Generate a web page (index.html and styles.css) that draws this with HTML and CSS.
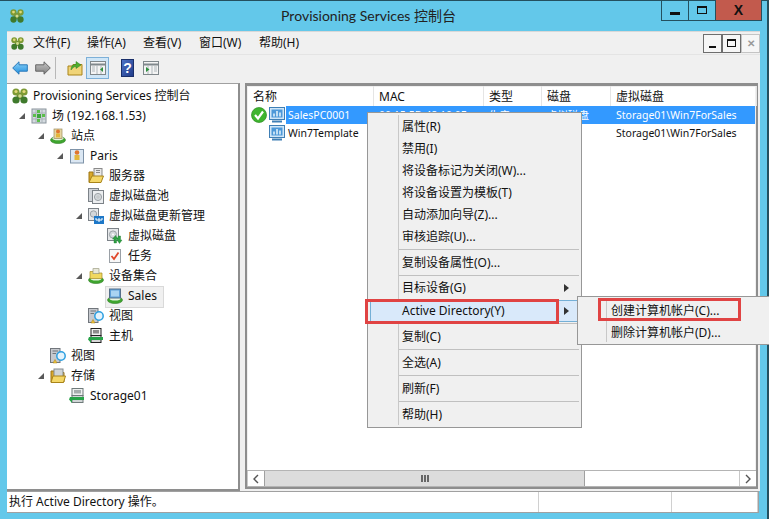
FILE: index.html
```html
<!DOCTYPE html>
<html lang="zh">
<head>
<meta charset="utf-8">
<title>Provisioning Services 控制台</title>
<link rel="stylesheet" href="styles.css">
</head>
<body>
<svg class="sprite" width="0" height="0" aria-hidden="true">
  <defs>
    <linearGradient id="gb" x1="0" y1="0" x2="0" y2="1"><stop offset="0" stop-color="#8fd4f7"/><stop offset="1" stop-color="#1f8fe0"/></linearGradient>
    <linearGradient id="gg" x1="0" y1="0" x2="0" y2="1"><stop offset="0" stop-color="#c4c4c4"/><stop offset="1" stop-color="#808080"/></linearGradient>
    <linearGradient id="gh" x1="0" y1="0" x2="1" y2="1"><stop offset="0" stop-color="#4f74c8"/><stop offset="1" stop-color="#1f3a88"/></linearGradient>
    <symbol id="logo" viewBox="0 0 16 16">
      <path d="M5 5L11 11M11 5L5 11" stroke="#6f8a35" stroke-width="4"/>
      <circle cx="4" cy="4" r="3.6" fill="#7d9a35"/><circle cx="12" cy="4" r="3.6" fill="#7d9a35"/>
      <circle cx="4" cy="12" r="3.6" fill="#3f7a2c"/><circle cx="12" cy="12" r="3.6" fill="#3f7a2c"/>
      <circle cx="4" cy="3.5" r="1.6" fill="#e2d878"/><circle cx="12" cy="3.5" r="1.6" fill="#e2d878"/>
      <circle cx="8" cy="8" r="1.8" fill="#d0dd90"/>
    </symbol>
    <symbol id="tri" viewBox="0 0 6 6"><path d="M6 0V6H0Z" fill="#595959"/></symbol>
    <symbol id="farm" viewBox="0 0 16 16">
      <rect x="1" y="1" width="14" height="14" fill="#d4dbe0" stroke="#8a949c"/>
      <path d="M5 1V15M11 1V15M1 5H15M1 11H15" stroke="#aab2b8"/>
      <rect x="6" y="6" width="4" height="4" fill="#3ea53e"/>
      <rect x="2" y="6" width="3" height="3" fill="#5bbf4a"/><rect x="11" y="6" width="3" height="3" fill="#5bbf4a"/>
      <rect x="6" y="2" width="3" height="3" fill="#5bbf4a"/><rect x="6" y="11" width="3" height="3" fill="#5bbf4a"/>
    </symbol>
    <symbol id="site" viewBox="0 0 16 16">
      <ellipse cx="8" cy="12" rx="7.5" ry="3.6" fill="#3fa52f" stroke="#2e7d22" stroke-width=".6"/>
      <ellipse cx="8" cy="10.2" rx="5.4" ry="2" fill="#e8f4e0"/>
      <rect x="4" y="1" width="8" height="9.5" fill="#e6d6a0" stroke="#9c8e60" stroke-width=".7"/>
      <circle cx="8" cy="3.5" r="2" fill="#e0762e"/><rect x="6" y="5.5" width="4" height="3.8" fill="#e3b63a"/>
    </symbol>
    <symbol id="paris" viewBox="0 0 16 16">
      <rect x="1.5" y="1.5" width="13" height="13.5" fill="#dbe7f3" stroke="#7f93a8"/>
      <circle cx="8" cy="4.5" r="2.3" fill="#e0762e"/><rect x="5.5" y="7" width="5" height="5" fill="#e3b63a"/>
    </symbol>
    <symbol id="srv" viewBox="0 0 16 16">
      <rect x="6" y="0.5" width="8" height="8" fill="#e8e8e8" stroke="#8a8a8a"/>
      <path d="M8 2.5H12M8 4.5H12" stroke="#8a8a8a"/>
      <path d="M1 4H5L5 14H13L13 14H1Z" fill="#d9a92c" stroke="#9c7413"/>
      <path d="M1 14.5L4 8H15.5L13 14.5Z" fill="#f4d768" stroke="#a98419"/>
    </symbol>
    <symbol id="pool" viewBox="0 0 16 16">
      <rect x="0.5" y="0.5" width="10" height="13" fill="#cfd3d8" stroke="#7c8288"/>
      <rect x="4.5" y="2.5" width="11" height="13" fill="#eceef0" stroke="#7c8288"/>
      <circle cx="10" cy="9" r="3.6" fill="#d3d7da" stroke="#9ca2a7"/><circle cx="10" cy="9" r="1" fill="#fff" stroke="#8a8f93" stroke-width=".5"/>
    </symbol>
    <symbol id="upd" viewBox="0 0 16 16">
      <rect x="0.5" y="0.5" width="10" height="12" fill="#e6e8ea" stroke="#7c8288"/>
      <circle cx="5.5" cy="6" r="3.2" fill="#d3d7da" stroke="#9ca2a7"/>
      <rect x="6" y="8" width="10" height="8" fill="#1e78c8"/>
      <path d="M8 10V12H14V10M11 10V14" stroke="#fff" fill="none"/>
    </symbol>
    <symbol id="vd" viewBox="0 0 16 16">
      <rect x="0.5" y="0.5" width="11" height="12" fill="#e6e8ea" stroke="#7c8288"/>
      <circle cx="6" cy="6.5" r="3.6" fill="#d3d7da" stroke="#9ca2a7"/><circle cx="6" cy="6.5" r="1" fill="#fff"/>
      <path d="M7 15V11L5.5 11L8.5 7.5L11 11H9.5V15ZM11 8H13.5V12H15L12.5 15.5L10 12" fill="#2ea043" stroke="#1c7a2e" stroke-width=".4"/>
    </symbol>
    <symbol id="task" viewBox="0 0 16 16">
      <rect x="2.5" y="1.5" width="11" height="13" fill="#f8f8f8" stroke="#9aa0a6"/>
      <path d="M4.5 8L7 11L11.5 4.5" stroke="#e0472a" stroke-width="1.8" fill="none"/>
    </symbol>
    <symbol id="coll" viewBox="0 0 16 16">
      <ellipse cx="8" cy="12" rx="7.5" ry="3.6" fill="#3fa52f" stroke="#2e7d22" stroke-width=".6"/>
      <ellipse cx="8" cy="10.4" rx="5.4" ry="2" fill="#e8f4e0"/>
      <path d="M2 3.5H6L7 5H14V10.5H2Z" fill="#f0d860" stroke="#a58b22" stroke-width=".7"/>
      <rect x="5" y="0.7" width="6" height="5" fill="#e8e8d8" stroke="#8d8d70" stroke-width=".6"/>
    </symbol>
    <symbol id="sales" viewBox="0 0 16 16">
      <ellipse cx="8" cy="12" rx="7.5" ry="3.6" fill="#3fa52f" stroke="#2e7d22" stroke-width=".6"/>
      <ellipse cx="8" cy="10.4" rx="5.4" ry="2" fill="#e8f4e0"/>
      <rect x="2.5" y="1" width="11" height="9" fill="#5d9fd8" stroke="#56708a"/>
      <rect x="4" y="2.5" width="8" height="6" fill="#a9d3f2"/>
    </symbol>
    <symbol id="view" viewBox="0 0 16 16">
      <rect x="0.5" y="0.5" width="9.5" height="14" fill="#c6c9ce" stroke="#71767c"/>
      <path d="M2.5 3H8M2.5 5.5H6" stroke="#71767c"/>
      <circle cx="11" cy="8" r="4.2" fill="#e4f3fc" stroke="#2d9fe0" stroke-width="1.5"/>
      <path d="M5 11.5L7 15H3Z" fill="#efc33a" stroke="#a5801a" stroke-width=".5"/>
    </symbol>
    <symbol id="host" viewBox="0 0 16 16">
      <rect x="3" y="0.5" width="10" height="7" fill="#f0f0f0" stroke="#222"/>
      <rect x="3" y="7.5" width="10" height="7" fill="#d8d8d8" stroke="#222"/>
      <rect x="5" y="2" width="6" height="3.5" fill="#8d8d8d"/>
      <path d="M1 9H15V12H3V15L0 11.5Z" fill="#27a348"/>
    </symbol>
    <symbol id="store" viewBox="0 0 16 16">
      <path d="M1 3H6L7 4.5H14V14H1Z" fill="#d9a92c" stroke="#9c7413"/>
      <rect x="4" y="1" width="9" height="9" fill="#cfd5d8" stroke="#858c90"/>
      <path d="M1 14.5L3 8H15.5L13.5 14.5Z" fill="#f4d768" stroke="#a98419"/>
    </symbol>
    <symbol id="stor1" viewBox="0 0 16 16">
      <rect x="3" y="0.5" width="11" height="7" fill="#eef0f0" stroke="#6f7a7a"/>
      <rect x="3" y="7.5" width="11" height="7" fill="#cfd5d5" stroke="#6f7a7a"/>
      <rect x="5" y="2" width="7" height="3.5" fill="#a5adad"/>
      <path d="M1 9H15V12H3V15L0 11.5Z" fill="#27a348"/>
    </symbol>
    <symbol id="pc" viewBox="0 0 16 16">
      <rect x="0.5" y="0.5" width="15" height="12" fill="#cfe6f8" stroke="#3f7fb5"/>
      <rect x="2.5" y="2.5" width="11" height="8" fill="#4d98d8"/>
      <path d="M5 9.5V6.5M8 9.5V4M11 9.5V5.5" stroke="#dff0fb" stroke-width="1.6"/>
      <path d="M3 14.5H13" stroke="#3f7fb5" stroke-width="2"/>
    </symbol>
    <symbol id="ok" viewBox="0 0 16 16">
      <circle cx="8" cy="8" r="7.5" fill="#3fb52f" stroke="#2a8a20" stroke-width=".7"/>
      <path d="M4 8L7 11.5L12 4.5" stroke="#fff" stroke-width="2.2" fill="none"/>
    </symbol>
    <symbol id="back" viewBox="0 0 16 14"><path d="M.7 7L7 .8V3.8H15.3V10.2H7V13.2Z" fill="url(#gb)" stroke="#2a78b8" stroke-linejoin="round"/></symbol>
    <symbol id="fwd" viewBox="0 0 16 14"><path d="M15.3 7L9 .8V3.8H.7V10.2H9V13.2Z" fill="url(#gg)" stroke="#666" stroke-linejoin="round"/></symbol>
    <symbol id="up" viewBox="0 0 16 16">
      <path d="M1 6H5L6 4.5H15V15H1Z" fill="#f0d478" stroke="#a98419"/>
      <path d="M4 10C4 6 6 4.500 9 4.500V1.500L14 5L9 8.500V6.500C7 6.500 5.500 8 4 10Z" fill="#4fae2f" stroke="#2c7e20" stroke-width=".5"/>
    </symbol>
    <symbol id="panel-l" viewBox="0 0 16 16">
      <rect x="0.5" y="1.5" width="15" height="13" fill="#f4f4f4" stroke="#80888c"/>
      <path d="M0.5 4.500H15.500" stroke="#80888c" stroke-width="2"/>
      <path d="M7 5V14M11 5V14" stroke="#b0b8bc"/>
      <path d="M13 7V12L10 9.500Z" fill="#2e8f3e"/><path d="M2 7H5M2 9H5M2 11H5" stroke="#b0b8bc"/>
    </symbol>
    <symbol id="panel-r" viewBox="0 0 16 16">
      <rect x="0.5" y="1.5" width="15" height="13" fill="#f4f4f4" stroke="#80888c"/>
      <path d="M0.5 4.500H15.500" stroke="#80888c" stroke-width="2"/>
      <path d="M5 5V14M9 5V14" stroke="#b0b8bc"/>
      <path d="M3 7V12L6.500 9.500Z" fill="#2e8f3e"/><path d="M11 7H14M11 9H14M11 11H14" stroke="#b0b8bc"/>
    </symbol>
    <symbol id="help" viewBox="0 0 13 18">
      <rect x="0.5" y="0.5" width="12" height="17" fill="url(#gh)" stroke="#1a2f6a"/>
      <text x="6.5" y="14" font-size="14" font-weight="700" font-family="Liberation Sans" text-anchor="middle" fill="#fff">?</text>
    </symbol>
  </defs>
</svg>

<div class="window">
  <header class="titlebar">
    <svg class="ico title-logo"><use href="#logo"/></svg>
    <div class="title">Provisioning Services 控制台</div>
    <div class="caption">
      <div class="cap cap-min"><span class="glyph-min"></span></div>
      <div class="cap cap-max"><span class="glyph-max"></span></div>
      <div class="cap cap-close">X</div>
    </div>
  </header>

  <div class="client">
    <nav class="menubar">
      <svg class="ico menu-logo"><use href="#logo"/></svg>
      <span class="menu-item">文件(F)</span>
      <span class="menu-item">操作(A)</span>
      <span class="menu-item">查看(V)</span>
      <span class="menu-item">窗口(W)</span>
      <span class="menu-item">帮助(H)</span>
      <div class="mdi">
        <div class="mdi-btn"><span class="mdi-min"></span></div>
        <div class="mdi-btn"><span class="mdi-restore"></span></div>
        <div class="mdi-btn mdi-off">✕</div>
      </div>
    </nav>

    <div class="toolbar">
      <svg class="tb-arrow tb-back"><use href="#back"/></svg>
      <svg class="tb-arrow tb-fwd"><use href="#fwd"/></svg>
      <span class="tb-sep"></span>
      <svg class="ico tb-up"><use href="#up"/></svg>
      <span class="tb-btn on"><svg class="ico"><use href="#panel-l"/></svg></span>
      <svg class="tb-help"><use href="#help"/></svg>
      <svg class="ico tb-panel"><use href="#panel-r"/></svg>
    </div>

    <div class="panes">
      <aside class="tree">
        <div class="row l0"><svg class="ico"><use href="#logo"/></svg><span>Provisioning Services 控制台</span></div>
        <div class="row l1"><svg class="exp"><use href="#tri"/></svg><svg class="ico"><use href="#farm"/></svg><span>场 (192.168.1.53)</span></div>
        <div class="row l2"><svg class="exp"><use href="#tri"/></svg><svg class="ico"><use href="#site"/></svg><span>站点</span></div>
        <div class="row l3"><svg class="exp"><use href="#tri"/></svg><svg class="ico"><use href="#paris"/></svg><span>Paris</span></div>
        <div class="row l4"><i class="noexp"></i><svg class="ico"><use href="#srv"/></svg><span>服务器</span></div>
        <div class="row l4"><i class="noexp"></i><svg class="ico"><use href="#pool"/></svg><span>虚拟磁盘池</span></div>
        <div class="row l4"><svg class="exp"><use href="#tri"/></svg><svg class="ico"><use href="#upd"/></svg><span>虚拟磁盘更新管理</span></div>
        <div class="row l5"><i class="noexp"></i><svg class="ico"><use href="#vd"/></svg><span>虚拟磁盘</span></div>
        <div class="row l5"><i class="noexp"></i><svg class="ico"><use href="#task"/></svg><span>任务</span></div>
        <div class="row l4"><svg class="exp"><use href="#tri"/></svg><svg class="ico"><use href="#coll"/></svg><span>设备集合</span></div>
        <div class="row l5 current"><i class="noexp"></i><svg class="ico"><use href="#sales"/></svg><span>Sales</span></div>
        <div class="row l4"><i class="noexp"></i><svg class="ico"><use href="#view"/></svg><span>视图</span></div>
        <div class="row l4"><i class="noexp"></i><svg class="ico"><use href="#host"/></svg><span>主机</span></div>
        <div class="row l2"><i class="noexp"></i><svg class="ico"><use href="#view"/></svg><span>视图</span></div>
        <div class="row l2"><svg class="exp"><use href="#tri"/></svg><svg class="ico"><use href="#store"/></svg><span>存储</span></div>
        <div class="row l3"><i class="noexp"></i><svg class="ico"><use href="#stor1"/></svg><span>Storage01</span></div>
      </aside>

      <section class="list">
        <div class="list-head">
          <div class="col c-name">名称</div>
          <div class="col c-mac">MAC</div>
          <div class="col c-type">类型</div>
          <div class="col c-disk">磁盘</div>
          <div class="col c-vdisk">虚拟磁盘</div>
        </div>
        <div class="list-body">
          <div class="item sel">
            <div class="cell c-name"><svg class="ico status"><use href="#ok"/></svg><svg class="ico"><use href="#pc"/></svg><span class="cell-text">SalesPC0001</span></div>
            <div class="cell c-mac">00:15:5D:48:10:0F</div>
            <div class="cell c-type">生产</div>
            <div class="cell c-disk">虚拟磁盘</div>
            <div class="cell c-vdisk">Storage01\Win7ForSales</div>
          </div>
          <div class="item">
            <div class="cell c-name"><i class="status"></i><svg class="ico"><use href="#pc"/></svg><span class="cell-text">Win7Template</span></div>
            <div class="cell c-mac"></div>
            <div class="cell c-type"></div>
            <div class="cell c-disk"></div>
            <div class="cell c-vdisk">Storage01\Win7ForSales</div>
          </div>
        </div>
        <div class="hscroll">
          <span class="sb-btn"><svg class="chev" viewBox="0 0 6 10"><path d="M5 1L1 5L5 9" fill="none" stroke="#555" stroke-width="1.4"/></svg></span>
          <span class="sb-thumb"><i></i><i></i><i></i></span>
          <span class="sb-track"></span>
          <span class="sb-btn"><svg class="chev" viewBox="0 0 6 10"><path d="M1 1L5 5L1 9" fill="none" stroke="#555" stroke-width="1.4"/></svg></span>
        </div>
      </section>
    </div>

    <footer class="status-bar">
      <div class="st st-main">执行 Active Directory 操作。</div>
      <div class="st st-mid"></div>
      <div class="st st-end"></div>
    </footer>
  </div>
</div>

<div class="menu ctx">
  <div class="mi">属性(R)</div>
  <div class="mi">禁用(I)</div>
  <div class="mi">将设备标记为关闭(W)...</div>
  <div class="mi">将设备设置为模板(T)</div>
  <div class="mi">自动添加向导(Z)...</div>
  <div class="mi">审核追踪(U)...</div>
  <div class="ms"></div>
  <div class="mi">复制设备属性(O)...</div>
  <div class="ms ms-short"></div>
  <div class="mi has-sub">目标设备(G)</div>
  <div class="mi has-sub hot">Active Directory(Y)</div>
  <div class="ms"></div>
  <div class="mi">复制(C)</div>
  <div class="ms"></div>
  <div class="mi">全选(A)</div>
  <div class="ms"></div>
  <div class="mi">刷新(F)</div>
  <div class="ms"></div>
  <div class="mi">帮助(H)</div>
</div>

<div class="menu sub">
  <div class="mi">创建计算机帐户(C)...</div>
  <div class="mi">删除计算机帐户(D)...</div>
</div>

<div class="mark mark-a"></div>
<div class="mark mark-b"></div>
</body>
</html>
```

FILE: styles.css
```css
* { box-sizing: border-box; }
html, body { margin: 0; padding: 0; }
body {
  width: 769px;
  height: 519px;
  overflow: hidden;
  position: relative;
  background: #63c8ea;
  font: 12px/16px "Noto Sans", "Noto Sans CJK SC", sans-serif;
  color: #111;
}
.sprite { position: absolute; }
.ico { width: 16px; height: 16px; flex: none; display: block; }

.window { display: flex; flex-direction: column; height: 519px; border-top: 1px solid #24505f; border-right: 2px solid #24505f; }

.titlebar { height: 30px; display: flex; align-items: flex-start; flex: none; }
.title-logo { margin: 8px 0 0 10px; width: 14px; height: 14px; }
.title { flex: 1; text-align: center; font: 14px/20px "Lato", "Noto Sans CJK SC", sans-serif; margin: 5px 0 0 -12px; padding-left: 64px; color: #222; }
.caption { display: flex; height: 21px; margin-right: 5px; margin-top: -1px; border: 1px solid #24505f; border-top: 0; }
.cap { height: 20px; display: flex; align-items: center; justify-content: center; }
.cap-min { width: 27px; border-right: 1px solid #24505f; }
.cap-max { width: 27px; border-right: 1px solid #24505f; }
.cap-close { width: 45px; background: #c25a4d; font: 700 14px/20px "Liberation Sans", sans-serif; color: #111; }
.glyph-min { width: 10px; height: 3px; background: #111; margin-top: 6px; }
.glyph-max { width: 10px; height: 8px; border: 1px solid #111; border-top-width: 2px; }

.client { flex: 1; display: flex; flex-direction: column; margin: 0 7px 6px 7px; min-height: 0; }

.menubar { height: 23px; flex: none; background: #f0f0f0; display: flex; align-items: center; padding-left: 4px; border-top: 1px solid #d8d8d8; }
.menu-logo { width: 13px; height: 13px; margin-right: 9px; }
.menu-item { width: 56px; flex: none; }
.menu-item:first-of-type { width: 54px; }
.menu-item:last-of-type { margin-left: 4px; }
.mdi { margin-left: auto; display: flex; }
.mdi-btn { width: 19px; height: 19px; background: #f6f6f6; border: 1px solid #6e6e6e; display: flex; align-items: center; justify-content: center; }
.mdi-off { border-color: #c4c4c4; color: #9a9a9a; font: 700 10px/17px "Liberation Sans", sans-serif; }
.mdi-min { width: 7px; height: 2px; background: #111; margin-top: 8px; }
.mdi-restore { width: 9px; height: 8px; border: 1px solid #111; border-top-width: 2px; }

.toolbar { height: 29px; flex: none; background: #f0f0f0; display: flex; align-items: center; padding: 0 0 3px 5px; border-top: 1px solid #e4e4e4; }
.tb-arrow { width: 16px; height: 14px; flex: none; }
.tb-fwd { margin-left: 7px; }
.tb-sep { width: 1px; height: 22px; background: #b8b8b8; margin: 0 11px 0 4px; }
.tb-up { margin-right: 3px; }
.tb-btn { width: 23px; height: 22px; background: #cfe6f7; border: 1px solid #7db0d8; display: flex; align-items: center; justify-content: center; }
.tb-help { width: 13px; height: 18px; margin-left: 12px; flex: none; }
.tb-panel { margin-left: 9px; }

.panes { flex: 1; display: flex; min-height: 0; background: #f0f0f0; gap: 5px; padding-right: 2px; }

.tree { width: 233px; flex: none; background: #fff; border-top: 1px solid #a0a0a0; border-right: 2px solid #8e8e8e; border-bottom: 2px solid #8e8e8e; padding-top: 2px; overflow: hidden; }
.row { height: 20px; display: flex; align-items: center; white-space: nowrap; }
.row > .ico { margin-right: 5px; }
.l0 { padding-left: 5px; }
.l1 { padding-left: 12px; }
.l2 { padding-left: 31px; }
.l3 { padding-left: 50px; }
.l4 { padding-left: 69px; }
.l5 { padding-left: 88px; }
.exp { width: 6px; height: 6px; margin-right: 6px; flex: none; }
.noexp { width: 12px; flex: none; }
.current { position: relative; }
.current::before { content: ""; position: absolute; left: 98px; top: 0; width: 57px; height: 20px; background: #f0f0f0; border: 1px solid #d9d9d9; }
.current > * { position: relative; }

.list { flex: 1; min-width: 0; background: #fff; border: 2px solid #8e8e8e; border-top-width: 3px; margin-bottom: 2px; display: flex; flex-direction: column; box-shadow: inset 0 0 0 1px #f0f0f0; }
.list-head { height: 20px; display: flex; flex: none; padding-left: 2px; }
.col { padding-left: 4px; line-height: 22px; border-right: 1px solid #e5e5e5; flex: none; }
.c-name { width: 125px; }
.c-mac { width: 110px; }
.c-type { width: 58px; }
.c-disk { width: 69px; }
.c-vdisk { width: 146px; }
.col.c-mac, .col.c-type, .col.c-disk, .col.c-vdisk { padding-left: 5px; }
.list-body { flex: 1; }
.item { height: 18px; display: flex; white-space: nowrap; padding-left: 2px; }
.cell { flex: none; font-size: 10.5px; line-height: 18px; padding-left: 5px; overflow: hidden; }
.cell.c-name { display: flex; align-items: center; padding-left: 2px; overflow: visible; }
.status { width: 16px; height: 16px; margin-right: 2px; flex: none; }
.cell-text { padding-left: 2px; flex: 1; margin-left: 1px; height: 18px; }
.sel .cell-text, .sel .cell:not(.c-name) { background: #3399ff; color: #fff; }
.sel { padding-right: 1px; }
.sel .c-vdisk { flex: 1; }

.hscroll { height: 17px; flex: none; display: flex; border-top: 1px solid #b4b4b4; border-bottom: 1px solid #b4b4b4; }
.sb-btn { width: 17px; flex: none; background: #fff; display: flex; align-items: center; justify-content: center; border-left: 1px solid #c8c8c8; }
.chev { width: 6px; height: 10px; }
.sb-thumb { width: 321px; flex: none; background: #dcdcdc; border: 1px solid #a0a0a0; border-width: 0 1px; display: flex; align-items: center; justify-content: center; gap: 1px; }
.sb-thumb i { width: 2px; height: 7px; background: #666; }
.sb-track { flex: 1; background: #fff; }

.status-bar { height: 22px; flex: none; background: #fff; line-height: 20px; border-top: 1px solid #a0a0a0; border-bottom: 1px solid #a0a0a0; border-right: 1px solid #a0a0a0; margin-right: 1px; display: flex; }
.st { border-right: 1px solid #d0d0d0; height: 20px; }
.st-main { width: 532px; padding-left: 2px; }
.st-mid { width: 133px; }
.st-end { flex: 1; }

.menu { position: absolute; background: #f0f0f0; border: 1px solid #979797; padding: 3px 2px 2px; }
.menu::before { content: ""; position: absolute; top: 2px; bottom: 2px; width: 1px; background: #c8c8c8; }
.mi { height: 22px; line-height: 22px; padding-left: 31px; position: relative; white-space: nowrap; border: 1px solid transparent; border-width: 0 1px; }
.ms { height: 4px; margin-left: 29px; position: relative; }
.ms-short { height: 3px; }
.ms::before { content: ""; position: absolute; left: 0; right: 0; top: 1px; height: 1px; background: #c0c0c0; }
.has-sub::after { content: ""; position: absolute; right: 9px; top: 7px; border: 4px solid transparent; border-left: 5px solid #333; border-right: 0; }
.hot { background: #d9e9fa; border: 1px solid #74afd6; line-height: 20px; margin-top: 1px; }
.hot.has-sub::after { top: 6px; }
.ctx { left: 367px; top: 112px; width: 215px; height: 316px; }
.ctx::before { left: 30px; }
.sub { left: 577px; top: 296px; width: 192px; height: 49px; border-right: 0; padding-top: 3px; }
.sub::before { left: 28px; }
.sub .mi { padding-left: 30px; }

.mark { position: absolute; border: 3px solid #e04343; }
.mark-a { left: 365px; top: 299px; width: 194px; height: 25px; }
.mark-b { left: 598px; top: 298px; width: 143px; height: 23px; }
```
